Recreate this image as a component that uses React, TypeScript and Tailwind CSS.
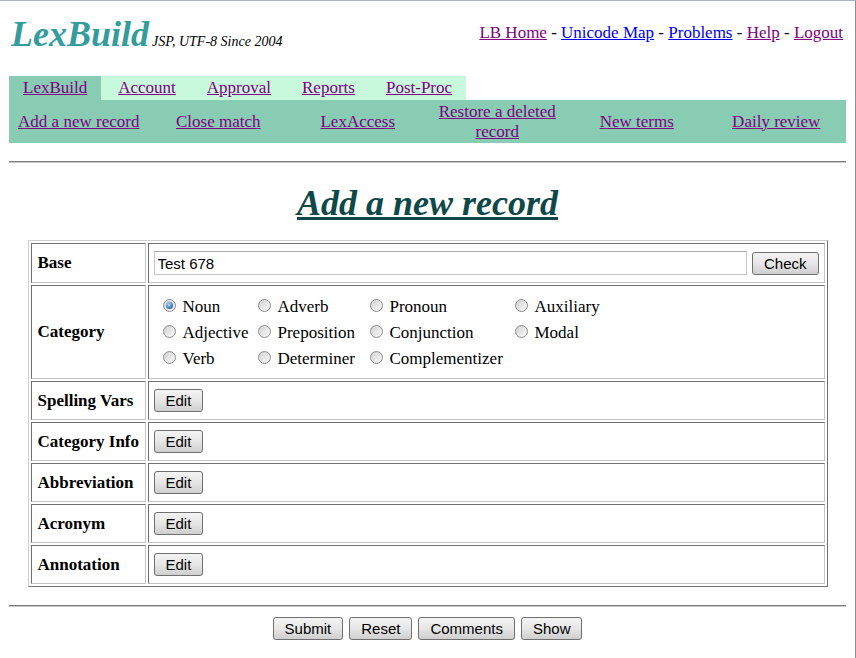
import React from 'react';

const tabs = ['LexBuild', 'Account', 'Approval', 'Reports', 'Post-Proc'];
const subnav = ['Add a new record', 'Close match', 'LexAccess', 'Restore a deleted record', 'New terms', 'Daily review'];
const categories = [
  ['Noun', 'Adverb', 'Pronoun', 'Auxiliary'],
  ['Adjective', 'Preposition', 'Conjunction', 'Modal'],
  ['Verb', 'Determiner', 'Complementizer', ''],
];
const editRows = ['Spelling Vars', 'Category Info', 'Abbreviation', 'Acronym', 'Annotation'];

const cell =
  'border border-t-[#707070] border-l-[#707070] border-r-[#c4c4c4] border-b-[#c4c4c4] align-middle';
const labelCell = `${cell} w-[115px] pl-[6px] pr-0 text-[17px] font-bold whitespace-nowrap`;
const valueCell = `${cell} px-[5px] py-[7px]`;

function Button({ children }: { children: React.ReactNode }) {
  return (
    <button className="h-[23px] rounded-[3px] border border-[#707070] bg-linear-to-b from-[#f4f4f4] via-[#e6e6e6] to-[#cfcfcf] px-[11px] font-['Liberation_Sans',Arial,sans-serif] text-[15px] leading-none text-black">
      {children}
    </button>
  );
}

function Radio({ checked }: { checked?: boolean }) {
  return (
    <span className="-mt-[4px] flex h-[13px] w-[13px] shrink-0 items-center justify-center rounded-full border border-[#8c8c8c] bg-linear-to-br from-[#d2d2d2] to-[#fafafa]">
      {checked && (
        <span className="h-[7px] w-[7px] rounded-full bg-[radial-gradient(circle_at_40%_35%,#b4e0ff,#2d72b4_65%,#1a4a80)]" />
      )}
    </span>
  );
}

export default function App() {
  return (
    <div className="min-h-screen border-t border-r border-t-[#a9b5c1] border-r-[#8a8f94] bg-white px-[9px] font-['Liberation_Serif','Times_New_Roman',serif] text-black">
      {/* header */}
      <div className="flex justify-between pt-[13px] pr-[3px]">
        <div className="ml-[2px] flex items-baseline">
          <span className="text-[36px] leading-[40px] font-bold italic text-[#349c9c]">LexBuild</span>
          <span className="ml-[3px] text-[14px] italic">JSP, UTF-8 Since 2004</span>
        </div>
        <div className="mt-[9px] text-[17px] leading-[20px]">
          <a className="text-[#800080] underline">LB Home</a> -{' '}
          <a className="text-[#0000ee] underline">Unicode Map</a> -{' '}
          <a className="text-[#0000ee] underline">Problems</a> -{' '}
          <a className="text-[#800080] underline">Help</a> -{' '}
          <a className="text-[#800080] underline">Logout</a>
        </div>
      </div>

      {/* tabs */}
      <div className="mt-[22px] flex w-fit bg-[#c8f9dd] text-[17px] leading-[24px]">
        {tabs.map((t, i) => (
          <a
            key={t}
            className={`h-[24px] px-[14px] text-[#800080] underline ${i === 0 ? 'bg-[#88ccb4]' : 'ml-[3px]'}`}
          >
            {t}
          </a>
        ))}
      </div>
      <div className="grid h-[43px] grid-cols-6 bg-[#88ccb4] text-[17px] leading-[20px]">
        {subnav.map((s) => (
          <div key={s} className="flex items-center justify-center px-[8px] text-center">
            <a className="text-[#800080] underline">{s}</a>
          </div>
        ))}
      </div>

      <div className="mt-[18px] border-t border-b border-t-[#7a7a7a] border-b-[#cccccc]" />

      <h1 className="mt-[20px] text-center text-[36px] leading-[40px] font-bold italic text-[#0f4848] underline">
        Add a new record
      </h1>

      <table className="mx-auto mt-[17px] w-[800px] border-separate border-spacing-[2px] border border-t-[#d0d0d0] border-l-[#d0d0d0] border-r-[#707070] border-b-[#707070]">
        <tbody>
          <tr>
            <td className={labelCell}>Base</td>
            <td className={valueCell}>
              <div className="flex items-center gap-[5px]">
                <input
                  defaultValue="Test 678"
                  className="h-[24px] flex-1 border border-[#c4c4c4] border-t-[#a8a8a8] px-[3px] font-['Liberation_Sans',Arial,sans-serif] text-[15px] outline-none"
                />
                <Button>Check</Button>
              </div>
            </td>
          </tr>
          <tr>
            <td className={labelCell}>Category</td>
            <td className={`${cell} px-[5px] pt-[8px] pb-[6px]`}>
              <div className="ml-[9px] grid grid-cols-[95px_112px_145px_auto] text-[17px] leading-[26px]">
                {categories.flat().map((c, i) =>
                  c ? (
                    <div key={c} className="flex h-[26px] items-center">
                      <Radio checked={i === 0} />
                      <span className="ml-[7px] whitespace-nowrap">{c}</span>
                    </div>
                  ) : (
                    <div key={`empty-${i}`} />
                  ),
                )}
              </div>
            </td>
          </tr>
          {editRows.map((r) => (
            <tr key={r}>
              <td className={labelCell}>{r}</td>
              <td className={valueCell}>
                <div className="flex">
                  <Button>Edit</Button>
                </div>
              </td>
            </tr>
          ))}
        </tbody>
      </table>

      <div className="mt-[18px] border-t border-b border-t-[#7a7a7a] border-b-[#cccccc]" />

      <div className="mt-[10px] flex justify-center gap-[6px]">
        <Button>Submit</Button>
        <Button>Reset</Button>
        <Button>Comments</Button>
        <Button>Show</Button>
      </div>
    </div>
  );
}
